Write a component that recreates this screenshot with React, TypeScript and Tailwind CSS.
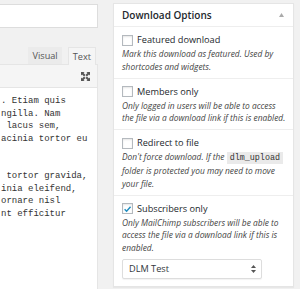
import React from 'react';

const sans = { fontFamily: '"Open Sans", "Noto Sans", sans-serif' };
const mono = { fontFamily: '"Liberation Mono", "DejaVu Sans Mono", monospace' };

function Check(props: { checked?: boolean }) {
    return (
        <span className="flex h-[11px] w-[11px] shrink-0 items-center justify-center border border-[#b4b9be] bg-white shadow-[inset_0_1px_2px_rgba(0,0,0,0.1)]">
            {props.checked && (
                <svg width="10" height="10" viewBox="0 0 10 10">
                    <path d="M1.8 5.2 L4 7.4 L8.4 2.4" stroke="#1e8cbe" strokeWidth="1.6" fill="none" />
                </svg>
            )}
        </span>
    );
}

function Option(props: { label: string, checked?: boolean, children: any, first?: boolean, extra?: any }) {
    return (
        <div className={`pl-[8px] pr-[4px] pt-[6px] pb-[4px] ${props.first ? '' : 'border-t border-[#eeeeee]'}`}>
            <div className="flex h-[14px] items-center gap-[4px] text-[9.2px] text-[#23282d]">
                <Check checked={props.checked} />
                <span>{props.label}</span>
            </div>
            <p className="mt-[1px] text-[8.4px] italic leading-[12.8px] text-[#444]">{props.children}</p>
            {props.extra}
        </div>
    );
}

const editorLines = [
    '. Etiam quis',
    'ngilla. Nam',
    ' lacus sem,',
    'acinia tortor eu',
    '',
    '',
    ' tortor gravida,',
    'inia eleifend,',
    'ornare nisl',
    'nt efficitur',
];

export default function App() {
    return (
        <div className="flex h-[289px] w-[300px] overflow-hidden bg-[#f1f1f1]" style={sans}>
            {/* editor column */}
            <div className="flex w-[98px] shrink-0 flex-col">
                <div className="mt-[4px] h-[24px] border-y border-r border-[#dddddd] bg-white" />
                <div className="mt-[19px] flex h-[17px] items-end justify-end gap-[6px] pr-[2px] text-[9.2px] text-[#555]">
                    <div className="flex h-[17px] items-center bg-[#ebebeb] px-[4px]">Visual</div>
                    <div className="relative z-10 -mb-px flex h-[18px] items-center border-x border-t border-[#e5e5e5] bg-[#f5f5f5] px-[4px]">Text</div>
                </div>
                <div className="flex h-[24px] items-center justify-end border border-l-0 border-[#e5e5e5] bg-[#f5f5f5] pr-[7px]">
                    <svg width="9" height="9" viewBox="0 0 10 10" fill="#555">
                        <path d="M0 0 L4 0 L2.8 1.2 L5 3.4 L3.4 5 L1.2 2.8 L0 4 Z" />
                        <path d="M10 0 L10 4 L8.8 2.8 L6.6 5 L5 3.4 L7.2 1.2 L6 0 Z" />
                        <path d="M0 10 L0 6 L1.2 7.2 L3.4 5 L5 6.6 L2.8 8.8 L4 10 Z" />
                        <path d="M10 10 L6 10 L7.2 8.8 L5 6.6 L6.6 5 L8.8 7.2 L10 6 Z" />
                    </svg>
                </div>
                <div className="flex-1 border-r border-[#e5e5e5] bg-white pt-[7px] text-[9px] leading-[12.5px] text-[#333]" style={mono}>
                    {editorLines.map((l, i) => (
                        <div key={i} className="h-[12.5px] whitespace-pre pl-[1px]">{l}</div>
                    ))}
                </div>
            </div>

            {/* Download Options box */}
            <div className="ml-[15px] mt-[3px] h-[284px] w-[181px] shrink-0 border border-[#e5e5e5] bg-white shadow-[0_1px_1px_rgba(0,0,0,0.04)]">
                <div className="flex h-[23px] items-center justify-between border-b border-[#eeeeee] pl-[8px] pr-[9px]">
                    <span className="text-[10px] font-semibold text-[#23282d]">Download Options</span>
                    <svg width="5" height="4" viewBox="0 0 5 4"><path d="M2.5 0 L5 4 L0 4 Z" fill="#aaa" /></svg>
                </div>
                <Option label="Featured download" first>
                    Mark this download as featured. Used by shortcodes and widgets.
                </Option>
                <Option label="Members only">
                    Only logged in users will be able to access the file via a download link if this is enabled.
                </Option>
                <Option label="Redirect to file">
                    Don't force download. If the{' '}
                    <code className="bg-[#eaeaea] px-[3px] py-[1px] not-italic text-[8.4px] text-[#333]" style={mono}>dlm_upload</code>{' '}
                    folder is protected you may need to move your file.
                </Option>
                <Option
                    label="Subscribers only"
                    checked
                    extra={
                        <div className="mt-[4px] flex h-[20px] w-[140px] items-center justify-between rounded-[2px] border border-[#dddddd] bg-white pl-[6px] pr-[5px] text-[9.2px] text-[#32373c] shadow-[0_1px_1px_rgba(0,0,0,0.05)]">
                            <span>DLM Test</span>
                            <svg width="5" height="8" viewBox="0 0 5 8" fill="#555">
                                <path d="M2.5 0 L5 3 L0 3 Z" />
                                <path d="M0 5 L5 5 L2.5 8 Z" />
                            </svg>
                        </div>
                    }
                >
                    Only MailChimp subscribers will be able to access the file via a download link if this is enabled.
                </Option>
            </div>
        </div>
    );
}
